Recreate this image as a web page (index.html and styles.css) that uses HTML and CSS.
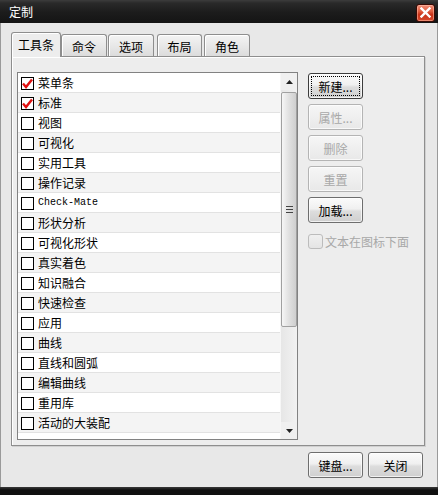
FILE: index.html
```html
<!DOCTYPE html>
<html lang="zh-CN">
<head>
<meta charset="utf-8">
<title>定制</title>
<link rel="stylesheet" href="styles.css">
</head>
<body>
<div class="window">
  <div class="titlebar">
    <span class="title">定制</span>
    <span class="close"><svg width="11" height="11" viewBox="0 0 11 11"><path d="M1.5 1.5 L9.5 9.5 M9.5 1.5 L1.5 9.5" stroke="#fff" stroke-width="2.4" stroke-linecap="square"/></svg></span>
  </div>
  <div class="content">
    <div class="tabs">
      <div class="tab active">工具条</div>
      <div class="tab t2">命令</div>
      <div class="tab t3">选项</div>
      <div class="tab t4">布局</div>
      <div class="tab t5">角色</div>
    </div>
    <div class="panel">
      <div class="listbox">
        <div class="rows">
          <div class="row"><span class="cb"><svg width="11" height="11" viewBox="0 0 11 11"><path d="M1 5.5 L4 9 L10 1.5" fill="none" stroke="#e01010" stroke-width="2.4"/></svg></span><span class="lbl">菜单条</span></div>
          <div class="row"><span class="cb"><svg width="11" height="11" viewBox="0 0 11 11"><path d="M1 5.5 L4 9 L10 1.5" fill="none" stroke="#e01010" stroke-width="2.4"/></svg></span><span class="lbl">标准</span></div>
          <div class="row"><span class="cb"></span><span class="lbl">视图</span></div>
          <div class="row"><span class="cb"></span><span class="lbl">可视化</span></div>
          <div class="row"><span class="cb"></span><span class="lbl">实用工具</span></div>
          <div class="row"><span class="cb"></span><span class="lbl">操作记录</span></div>
          <div class="row"><span class="cb"></span><span class="lbl mono">Check-Mate</span></div>
          <div class="row"><span class="cb"></span><span class="lbl">形状分析</span></div>
          <div class="row"><span class="cb"></span><span class="lbl">可视化形状</span></div>
          <div class="row"><span class="cb"></span><span class="lbl">真实着色</span></div>
          <div class="row"><span class="cb"></span><span class="lbl">知识融合</span></div>
          <div class="row"><span class="cb"></span><span class="lbl">快速检查</span></div>
          <div class="row"><span class="cb"></span><span class="lbl">应用</span></div>
          <div class="row"><span class="cb"></span><span class="lbl">曲线</span></div>
          <div class="row"><span class="cb"></span><span class="lbl">直线和圆弧</span></div>
          <div class="row"><span class="cb"></span><span class="lbl">编辑曲线</span></div>
          <div class="row"><span class="cb"></span><span class="lbl">重用库</span></div>
          <div class="row"><span class="cb"></span><span class="lbl">活动的大装配</span></div>
        </div>
        <div class="scrollbar">
          <div class="arrow"><svg width="7" height="4" viewBox="0 0 7 4"><path d="M0 4 L3.5 0 L7 4 Z" fill="#222"/></svg></div>
          <div class="track">
            <div class="thumb"><span class="grip"></span></div>
          </div>
          <div class="arrow"><svg width="7" height="4" viewBox="0 0 7 4"><path d="M0 0 L7 0 L3.5 4 Z" fill="#222"/></svg></div>
        </div>
      </div>
      <div class="side">
        <button class="btn focus"><span class="focusbox">新建...</span></button>
        <button class="btn" disabled>属性...</button>
        <button class="btn" disabled>删除</button>
        <button class="btn" disabled>重置</button>
        <button class="btn">加载...</button>
        <label class="chk"><span class="dbox"></span><span class="dtext">文本在图标下面</span></label>
      </div>
    </div>
    <div class="footer">
      <button class="btn wide">键盘...</button>
      <button class="btn wide">关闭</button>
    </div>
  </div>
  <div class="bottomframe"></div>
</div>
</body>
</html>
```
FILE: styles.css
```css
* { box-sizing: border-box; }
html, body { margin: 0; padding: 0; }
body {
  width: 438px;
  height: 495px;
  overflow: hidden;
  font-family: "Noto Sans CJK SC", "Liberation Sans", sans-serif;
  font-size: 12px;
  color: #000;
  background: #1a1a1a;
}
.window {
  width: 438px;
  height: 495px;
  display: flex;
  flex-direction: column;
}
.titlebar {
  height: 23px;
  flex: none;
  background: linear-gradient(#3c3c3c 0px, #2a2a2a 3px, #1c1c1c 12px, #141414 23px);
  display: flex;
  align-items: center;
  justify-content: space-between;
  padding: 0 3px 0 9px;
}
.title {
  color: #fff;
  font-size: 12px;
  line-height: 14px;
}
.close {
  width: 19px;
  height: 18px;
  border: 1px solid #3a0a04;
  border-radius: 3px;
  background: linear-gradient(#f0907a 0%, #e05c3e 40%, #c83218 60%, #d84a2c 100%);
  box-shadow: inset 0 0 0 1px rgba(255,200,180,0.5);
  display: flex;
  align-items: center;
  justify-content: center;
  margin-top: 2px;
}
.content {
  flex: 1;
  background: #e8e8e8;
  border-left: 1px solid #9a9a9a;
  border-right: 1px solid #9a9a9a;
  padding: 9px 12px 0 10px;
  display: flex;
  flex-direction: column;
}
.tabs {
  display: flex;
  align-items: flex-end;
  height: 24px;
  position: relative;
  z-index: 1;
}
.tab {
  height: 22px;
  border: 1px solid #8e8e8e;
  border-bottom: none;
  border-radius: 3px 3px 0 0;
  background: linear-gradient(#f4f4f4, #dcdcdc);
  box-shadow: inset 1px 1px 0 #fff;
  display: flex;
  align-items: center;
  justify-content: center;
  padding-top: 1px;
}
.tab.active {
  width: 50px;
  height: 25px;
  background: #ededed;
  margin-bottom: -1px;
  padding-bottom: 3px;
}
.tab.t2 { width: 46px; }
.tab.t3 { width: 46px; margin-left: 1px; }
.tab.t4 { width: 45px; margin-left: 3px; }
.tab.t5 { width: 46px; margin-left: 2px; }
.panel {
  height: 390px;
  flex: none;
  border: 1px solid #8e8e8e;
  background: #ededed;
  box-shadow: inset 1px 1px 0 #fff, 1px 1px 0 #d0d0d0;
  display: flex;
  padding: 15px 0 0 5px;
}
.listbox {
  width: 281px;
  height: 368px;
  border: 1px solid #828282;
  background: #fff;
  display: flex;
}
.rows {
  flex: 1;
  display: flex;
  flex-direction: column;
}
.row {
  height: 20px;
  flex: none;
  border-bottom: 1px solid #e2e2e2;
  display: flex;
  align-items: center;
  padding-left: 3px;
  background: #fff;
}
.row:nth-child(even) { background: #f4f4f4; }
.cb {
  width: 13px;
  height: 13px;
  border: 1px solid #000;
  background: #fff;
  display: flex;
  align-items: center;
  justify-content: center;
  margin-top: 2px;
  flex: none;
}
.lbl {
  margin-left: 4px;
  line-height: 16px;
  white-space: nowrap;
}
.lbl.mono {
  font-family: "Liberation Mono", monospace;
  font-size: 10px;
}
.scrollbar {
  width: 17px;
  flex: none;
  display: flex;
  flex-direction: column;
  background: #f0f0f0;
  border-left: 1px solid #f6f6f6;
}
.arrow {
  height: 17px;
  flex: none;
  display: flex;
  align-items: center;
  justify-content: center;
}
.track {
  flex: 1;
  background: linear-gradient(90deg, #e6e6e6, #f2f2f2);
  padding: 2px 0 0 0;
}
.thumb {
  height: 235px;
  border: 1px solid #a0a0a0;
  border-radius: 2px;
  background: linear-gradient(90deg, #f6f6f6 0%, #e2e2e2 45%, #cfcfcf 100%);
  display: flex;
  align-items: center;
  justify-content: center;
}
.grip {
  width: 7px;
  height: 7px;
  background: repeating-linear-gradient(#444 0 1px, transparent 1px 3px);
}
.side {
  display: flex;
  flex-direction: column;
  gap: 5px;
  margin-left: 10px;
  padding-top: 1px;
}
.btn {
  width: 55px;
  height: 26px;
  border: 1px solid #6e6e6e;
  border-radius: 3px;
  background: linear-gradient(#fbfbfb 0%, #f0f0f0 45%, #dddddd 55%, #cfcfcf 100%);
  font-family: "Noto Sans CJK SC", "Liberation Sans", sans-serif;
  font-size: 12px;
  color: #000;
  padding: 0;
  display: flex;
  align-items: center;
  justify-content: center;
  box-shadow: inset 0 0 0 1px rgba(255,255,255,0.7);
}
.btn:disabled {
  border-color: #b4b4b4;
  color: #a8a8a8;
  background: linear-gradient(#f6f6f6, #e8e8e8);
}
.btn.focus { border-color: #3c3c3c; }
.focusbox {
  width: 49px;
  height: 20px;
  border: 1px dotted #000;
  display: flex;
  align-items: center;
  justify-content: center;
}
.chk {
  display: flex;
  align-items: center;
  margin-top: 5px;
  color: #a8a8a8;
}
.dbox {
  width: 15px;
  height: 15px;
  border: 1px solid #bcbcbc;
  border-radius: 3px;
  background: linear-gradient(#f0f0f0, #e4e4e4);
  margin-right: 2px;
}
.footer {
  display: flex;
  justify-content: flex-end;
  gap: 5px;
  padding-top: 6px;
  padding-right: 2px;
}
.bottomframe {
  height: 8px;
  flex: none;
  background: linear-gradient(#3a3a3a, #101010 3px);
}
```
